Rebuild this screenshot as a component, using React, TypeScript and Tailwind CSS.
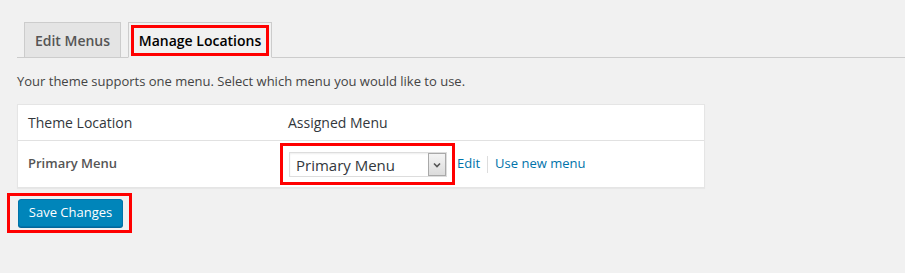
import React, { useState } from 'react';

const font = { fontFamily: '"Open Sans", "Noto Sans", Arial, sans-serif' };

const App: React.FC = () => {
  const [menu, setMenu] = useState('primary');

  return (
    <div className="w-[905px] h-[273px] bg-[#f1f1f1] text-[#444] overflow-hidden" style={font}>
      <div className="pt-[22px] pl-[17px]">
        {/* Tabs */}
        <div className="flex items-end gap-[7px] pl-[7px] border-b border-[#ccc]">
          <div className="-mb-px w-[97px] h-[36px] flex items-center justify-center border border-[#ccc] bg-[#e4e4e4] text-[14px] font-semibold text-[#555]">
            Edit Menus
          </div>
          <div className="-mb-px w-[144px] h-[36px] p-[2px] pb-[1px] border border-[#ccc] border-b-[#f1f1f1] bg-[#f1f1f1]">
            <div className="h-full flex items-center justify-center border-[3px] border-[#ff0000] text-[14px] font-semibold text-black">
              Manage Locations
            </div>
          </div>
        </div>

        <p className="mt-[14px] text-[13px] leading-[18px]">
          Your theme supports one menu. Select which menu you would like to use.
        </p>

        {/* Locations table */}
        <div className="mt-[14px] w-[688px] bg-white border border-[#e5e5e5] shadow-[0_1px_1px_rgba(0,0,0,0.04)]">
          <div className="flex h-[36px] items-center border-b border-[#e1e1e1] text-[14px] text-[#32373c]">
            <div className="w-[260px] pl-[10px]">Theme Location</div>
            <div className="pl-[10px]">Assigned Menu</div>
          </div>
          <div className="flex h-[46px] items-center">
            <div className="w-[260px] pl-[10px] text-[13px] font-semibold text-[#555]">Primary Menu</div>
            <div className="flex items-center pl-[2px]">
              <div className="border-[3px] border-[#ff0000] pt-[6px] pb-[5px] pl-[6px] pr-[5px]">
                <div className="relative w-[158px] h-[25px] bg-white border border-[#ddd] shadow-[inset_0_1px_2px_rgba(0,0,0,0.07)]">
                  <select
                    value={menu}
                    onChange={(e) => setMenu(e.target.value)}
                    className="w-full h-full pl-[6px] pr-[20px] bg-transparent appearance-none text-[15px] text-[#32373c] outline-none"
                    style={font}
                  >
                    <option value="primary">Primary Menu</option>
                  </select>
                  <div className="pointer-events-none absolute right-0 top-0 w-[18px] h-full flex items-center justify-center border border-[#a9a9a9] bg-gradient-to-b from-[#f4f4f4] to-[#dcdcdc]">
                    <svg width="8" height="6" viewBox="0 0 8 6">
                      <path d="M1 1.5 L4 4.5 L7 1.5" fill="none" stroke="#555" strokeWidth="1.6" />
                    </svg>
                  </div>
                </div>
              </div>
              <a href="#" className="ml-[2px] text-[13px] text-[#0073aa]">Edit</a>
              <span className="mx-[7px] w-px h-[17px] bg-[#ddd]" />
              <a href="#" className="text-[13px] text-[#0073aa]">Use new menu</a>
            </div>
          </div>
        </div>

        {/* Save */}
        <div className="mt-[5px] -ml-[10px] inline-block border-[3px] border-[#ff0000] pt-[3px] pb-[3px] pl-[8px] pr-[6px]">
          <button className="block w-[105px] h-[28px] rounded-[3px] bg-[#0085ba] border border-[#0073aa] shadow-[0_1px_0_#006799] text-[13px] text-white" style={font}>
            Save Changes
          </button>
        </div>
      </div>
    </div>
  );
};

export default App;
